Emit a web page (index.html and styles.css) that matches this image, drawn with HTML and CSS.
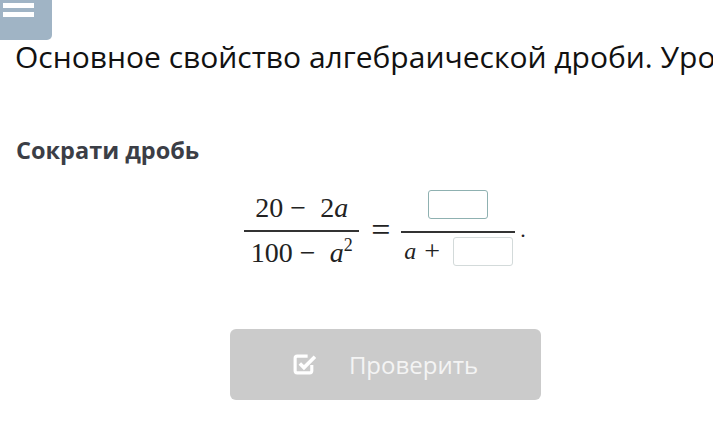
FILE: index.html
```html
<!DOCTYPE html>
<html lang="ru">
<head>
  <meta charset="UTF-8">
  <meta name="viewport" content="width=device-width, initial-scale=1.0">
  <title>Основное свойство алгебраической дроби</title>
  <link rel="stylesheet" href="styles.css">
</head>
<body>
  <button class="menu-btn" aria-label="Меню">
    <span class="bar"></span>
    <span class="bar"></span>
  </button>

  <h1 class="title">Основное свойство алгебраической дроби. Урок 2</h1>

  <h2 class="task">Сократи дробь</h2>

  <div class="workspace">
    <div class="formula">
      <div class="frac">
        <div class="num">20 −&nbsp; 2<i>a</i></div>
        <div class="den">100 −&nbsp; <i>a</i><sup>2</sup></div>
      </div>
      <span class="eq">=</span>
      <div class="frac frac-answer">
        <div class="num"><span class="answer answer-top"></span></div>
        <div class="den"><i>a</i><span class="plus">+</span><span class="answer answer-bottom"></span></div>
      </div>
      <span class="dot">.</span>
    </div>

    <button class="check-btn" disabled>
      <svg class="check-icon" viewBox="0 0 24 24" width="24" height="24">
        <path d="M19 12.5v5.5a2 2 0 0 1-2 2H5a2 2 0 0 1-2-2V6a2 2 0 0 1 2-2h10" fill="none" stroke="#fff" stroke-width="3"/>
        <path d="M7.5 11l4 4L22 4.5" fill="none" stroke="#fff" stroke-width="3.4"/>
      </svg>
      <span>Проверить</span>
    </button>
  </div>
</body>
</html>
```

FILE: styles.css
```css
body {
  margin: 0;
  font-family: 'Open Sans', sans-serif;
  background: #ffffff;
  color: #111;
  overflow: hidden;
}
.menu-btn {
  position: absolute;
  top: 0;
  left: 0;
  width: 52px;
  height: 40px;
  border: none;
  padding: 3px 0 0 3px;
  background: #a0b4c5;
  border-radius: 0 0 5px 0;
  display: flex;
  flex-direction: column;
  gap: 4px;
}
.menu-btn .bar {
  display: block;
  width: 31px;
  height: 5px;
  background: #fff;
}
.title {
  margin: 0;
  padding: 36px 0 0 15px;
  font-size: 30px;
  font-weight: 400;
  line-height: 42px;
  white-space: nowrap;
  overflow: hidden;
  color: #111;
}
.task {
  margin: 57px 0 0 16px;
  font-size: 23.5px;
  font-weight: 700;
  line-height: 30px;
  color: #3b3e46;
}
.workspace {
  padding-left: 57px;
  display: flex;
  flex-direction: column;
  align-items: center;
}
.formula {
  margin-top: 25px;
  display: flex;
  align-items: center;
  font-family: 'Liberation Serif', 'DejaVu Serif', serif;
  font-size: 28px;
  color: #222;
}
.frac {
  display: flex;
  flex-direction: column;
  align-items: stretch;
  text-align: center;
}
.frac .num {
  padding: 0 11px 6px;
  border-bottom: 2px solid #333;
  line-height: 32px;
}
.frac .den {
  padding: 5px 4px 0;
  line-height: 32px;
}
.frac sup {
  font-size: 18px;
  vertical-align: 11px;
  line-height: 0;
}
.eq {
  margin: 0 11px 0 12px;
  font-size: 34px;
  line-height: 1;
}
.frac-answer .num {
  display: flex;
  justify-content: center;
  padding: 0 0 12px;
  line-height: 0;
}
.frac-answer .den {
  display: flex;
  align-items: center;
  padding: 2px 2px 3px 3px;
  font-size: 24px;
}
.plus {
  margin: 0 13px 0 8px;
  font-size: 28px;
}
.answer {
  display: inline-block;
  width: 58px;
  height: 27px;
  border-radius: 3px;
  background: #fff;
}
.answer-top {
  border: 1.5px solid #8fb1b1;
}
.answer-bottom {
  border: 1px solid #d3dada;
}
.dot {
  margin-left: 5px;
  font-size: 22px;
  align-self: center;
  line-height: 1;
}
.check-btn {
  margin-top: 59px;
  width: 311px;
  height: 71px;
  border: none;
  border-radius: 6px;
  background: #cbcbcb;
  color: #f4f4f4;
  font-family: 'Open Sans', sans-serif;
  font-size: 24px;
  display: flex;
  align-items: center;
  justify-content: center;
  gap: 32px;
  padding: 0 0 0 0;
}
.check-icon {
  display: block;
  width: 25px;
  height: 25px;
}
```
